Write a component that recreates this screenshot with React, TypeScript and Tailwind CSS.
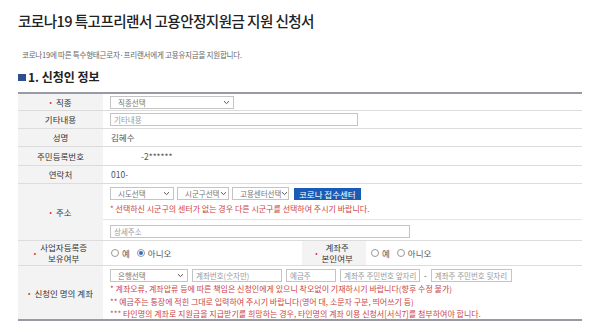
import React from 'react';

const font = { fontFamily: '"Noto Sans CJK KR", "Noto Sans", sans-serif' };

function Chevron() {
  return (
    <svg width="7" height="5" viewBox="0 0 7 5" className="shrink-0">
      <path d="M1 1.2 L3.5 3.6 L6 1.2" fill="none" stroke="#555" strokeWidth="1" />
    </svg>
  );
}

function FakeSelect({ label, w }: { label: string; w: string }) {
  return (
    <div className={`flex h-[13px] shrink-0 items-center justify-between overflow-hidden whitespace-nowrap border border-[#c4c4c4] bg-white pl-[7px] pr-[3px] text-[7.5px] text-[#777] ${w}`}>
      <span className="leading-none">{label}</span>
      <Chevron />
    </div>
  );
}

function FakeInput({ ph, w }: { ph: string; w: string }) {
  return (
    <div className={`flex h-[13px] shrink-0 items-center overflow-hidden whitespace-nowrap border border-[#c4c4c4] bg-white px-[3px] text-[7.5px] leading-none text-[#999] ${w}`}>
      {ph}
    </div>
  );
}

function Star() {
  return <span className="mr-[4px] text-[7px] text-[#d33]">•</span>;
}

function Label({ children, req }: { children: React.ReactNode; req?: boolean }) {
  return (
    <div className="flex h-full items-center justify-center whitespace-nowrap bg-[#f3f3f3] text-center text-[8.5px] leading-[11px] text-[#333]">
      {req && <Star />}
      <span>{children}</span>
    </div>
  );
}

function Radio({ checked, text }: { checked?: boolean; text: string }) {
  return (
    <span className="mr-[7px] inline-flex items-center gap-[3px] text-[8.5px] text-[#555]">
      <span className="flex h-[8px] w-[8px] items-center justify-center rounded-full border border-[#999] bg-white">
        {checked && <span className="h-[4px] w-[4px] rounded-full bg-[#2b6fd6]" />}
      </span>
      {text}
    </span>
  );
}

function Row({ children, h }: { children: React.ReactNode; h: string }) {
  return (
    <div className={`grid grid-cols-[85px_1fr] overflow-hidden border-b border-[#dcdcdc] ${h}`}>{children}</div>
  );
}

export default function App() {
  return (
    <div className="h-[335px] w-[600px] overflow-hidden bg-white" style={font}>
      <div className="px-[18px] pt-[10px]">
        <h1 className="whitespace-nowrap text-[14.6px] font-medium leading-[22px] tracking-[-0.04em] text-[#222]">
          코로나19 특고프리랜서 고용안정지원금 지원 신청서
        </h1>
        <p className="mt-[17px] pl-[4px] text-[7.5px] tracking-[-0.03em] text-[#666]">
          코로나19에 따른 특수형태근로자·프리랜서에게 고용유지금을 지원합니다.
        </p>
        <h2 className="mt-[9px] flex items-center text-[12px] font-bold leading-[16px] text-[#222]">
          <span className="mr-[2px] inline-block h-[7px] w-[8px] bg-[#2d4f8f]" />
          1. 신청인 정보
        </h2>

        <div className="mt-[7px] w-[564px] border-t-2 border-b-2 border-[#9a9aa6]">
          <Row h="h-[17px]">
            <Label req>직종</Label>
            <div className="flex items-center pl-[7px]">
              <FakeSelect label="직종선택" w="w-[124px]" />
            </div>
          </Row>
          <Row h="h-[18px]">
            <Label>기타내용</Label>
            <div className="flex items-center pl-[7px]">
              <FakeInput ph="기타내용" w="w-[248px]" />
            </div>
          </Row>
          <Row h="h-[18px]">
            <Label>성명</Label>
            <div className="flex items-center pl-[8px] text-[8.5px] text-[#555]">김혜수</div>
          </Row>
          <Row h="h-[19px]">
            <Label>주민등록번호</Label>
            <div className="flex items-center pl-[38px] text-[8.5px] text-[#555]">-2******</div>
          </Row>
          <Row h="h-[18px]">
            <Label>연락처</Label>
            <div className="flex items-center pl-[8px] text-[8.5px] text-[#555]">010-</div>
          </Row>
          <Row h="h-[57px]">
            <Label req>주소</Label>
            <div className="flex flex-col pt-[3px]">
              <div className="flex items-center gap-[3px] pl-[7px]">
                <FakeSelect label="시도선택" w="w-[64px]" />
                <FakeSelect label="시군구선택" w="w-[52px]" />
                <FakeSelect label="고용센터선택" w="w-[57px]" />
                <div className="ml-[2px] flex h-[12px] items-center whitespace-nowrap bg-[#1a5bb5] px-[5px] text-[8.5px] leading-none text-white">
                  코로나 접수센터
                </div>
              </div>
              <div className="mt-[3px] whitespace-nowrap pl-[7px] text-[8px] leading-[12px] text-[#c44]">
                * 선택하신 시군구의 센터가 없는 경우 다른 시군구를 선택하여 주시기 바랍니다.
              </div>
              <div className="mt-[4px] border-t border-[#e6e6e6] pl-[7px] pt-[5px]">
                <FakeInput ph="상세주소" w="w-[300px]" />
              </div>
            </div>
          </Row>
          <div className="grid h-[25px] grid-cols-[85px_199px_64px_1fr] overflow-hidden border-b border-[#dcdcdc]">
            <Label req>
              사업자등록증
              <br />
              보유여부
            </Label>
            <div className="flex items-center pl-[8px]">
              <Radio text="예" />
              <Radio checked text="아니오" />
            </div>
            <Label req>
              계좌주
              <br />
              본인여부
            </Label>
            <div className="flex items-center pl-[5px]">
              <Radio text="예" />
              <Radio text="아니오" />
            </div>
          </div>
          <div className="grid h-[53px] grid-cols-[85px_1fr] overflow-hidden">
            <Label req>신청인 명의 계좌</Label>
            <div className="flex flex-col pl-[7px] pt-[3px]">
              <div className="flex items-center gap-[4px]">
                <FakeSelect label="은행선택" w="w-[78px]" />
                <FakeInput ph="계좌번호(숫자만)" w="w-[90px]" />
                <FakeInput ph="예금주" w="w-[50px]" />
                <FakeInput ph="계좌주 주민번호 앞자리" w="w-[80px]" />
                <span className="text-[8px] text-[#555]">-</span>
                <FakeInput ph="계좌주 주민번호 뒷자리" w="w-[81px]" />
              </div>
              <div className="mt-[1px] whitespace-nowrap text-[8px] leading-[12.5px] text-[#c44]">
                <div>* 계좌오류, 계좌압류 등에 따른 책임은 신청인에게 있으니 착오없이 기재하시기 바랍니다(향후 수정 불가)</div>
                <div>** 예금주는 통장에 적힌 그대로 입력하여 주시기 바랍니다(영어 대, 소문자 구분, 띄어쓰기 등)</div>
                <div>*** 타인명의 계좌로 지원금을 지급받기를 희망하는 경우, 타인명의 계좌 이용 신청서[서식7]를 첨부하여야 합니다.</div>
              </div>
            </div>
          </div>
        </div>
      </div>
    </div>
  );
}
